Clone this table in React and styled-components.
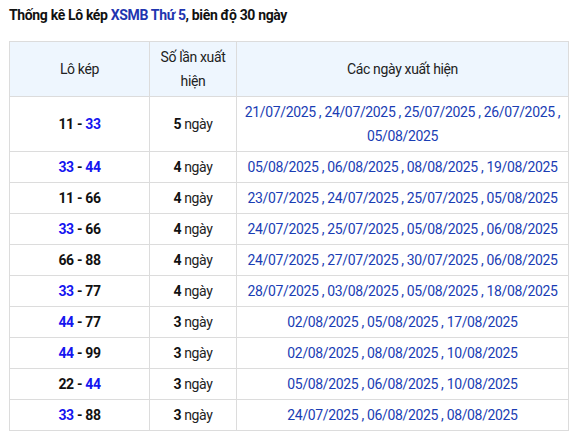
import React from 'react';
import styled, { createGlobalStyle } from 'styled-components';

const GlobalStyle = createGlobalStyle`
  body {
    margin: 0;
    background: #fff;
    font-family: Roboto, "Noto Sans", Arial, sans-serif;
    letter-spacing: -0.35px;
  }
`;

const rows = [
  { a: '11', aBlue: false, b: '33', bBlue: true, n: 5, dates: ['21/07/2025', '24/07/2025', '25/07/2025', '26/07/2025', '05/08/2025'] },
  { a: '33', aBlue: true, b: '44', bBlue: true, n: 4, dates: ['05/08/2025', '06/08/2025', '08/08/2025', '19/08/2025'] },
  { a: '11', aBlue: false, b: '66', bBlue: false, n: 4, dates: ['23/07/2025', '24/07/2025', '25/07/2025', '05/08/2025'] },
  { a: '33', aBlue: true, b: '66', bBlue: false, n: 4, dates: ['24/07/2025', '25/07/2025', '05/08/2025', '06/08/2025'] },
  { a: '66', aBlue: false, b: '88', bBlue: false, n: 4, dates: ['24/07/2025', '27/07/2025', '30/07/2025', '06/08/2025'] },
  { a: '33', aBlue: true, b: '77', bBlue: false, n: 4, dates: ['28/07/2025', '03/08/2025', '05/08/2025', '18/08/2025'] },
  { a: '44', aBlue: true, b: '77', bBlue: false, n: 3, dates: ['02/08/2025', '05/08/2025', '17/08/2025'] },
  { a: '44', aBlue: true, b: '99', bBlue: false, n: 3, dates: ['02/08/2025', '08/08/2025', '10/08/2025'] },
  { a: '22', aBlue: false, b: '44', bBlue: true, n: 3, dates: ['05/08/2025', '06/08/2025', '10/08/2025'] },
  { a: '33', aBlue: true, b: '88', bBlue: false, n: 3, dates: ['24/07/2025', '06/08/2025', '08/08/2025'] },
];

function App() {
  return (
    <Page>
      <GlobalStyle />
      <Title>
        Thống kê Lô kép <TitleLink>XSMB Thứ 5</TitleLink>, biên độ 30 ngày
      </Title>
      <Table>
        <colgroup>
          <col style={{ width: 140 }} />
          <col style={{ width: 87 }} />
          <col />
        </colgroup>
        <thead>
          <tr>
            <HeadCell>Lô kép</HeadCell>
            <HeadCell>Số lần xuất hiện</HeadCell>
            <HeadCell>Các ngày xuất hiện</HeadCell>
          </tr>
        </thead>
        <tbody>
          {rows.map((r, i) => (
            <tr key={i}>
              <Cell>
                <Pair>
                  <Num $blue={r.aBlue}>{r.a}</Num> - <Num $blue={r.bBlue}>{r.b}</Num>
                </Pair>
              </Cell>
              <Cell>
                <Count>{r.n}</Count> ngày
              </Cell>
              <DateCell>{r.dates.join(' , ')}</DateCell>
            </tr>
          ))}
        </tbody>
      </Table>
    </Page>
  );
}

export default App;

const Page = styled.div`
  padding: 3px 2px 0 9px;
`

const Title = styled.h2`
  margin: 0 0 14px;
  font-size: 14px;
  line-height: 24px;
  font-weight: 700;
  color: #111;
`

const TitleLink = styled.span`
  color: #1f35b0;
`

const Table = styled.table`
  width: 560px;
  border-collapse: collapse;
  table-layout: fixed;
  font-size: 14px;
  line-height: 24px;
  color: #222;
`

const HeadCell = styled.th`
  background: #eef6fe;
  border: 1px solid #dcdcdc;
  font-weight: 400;
  padding: 3px 6px;
  text-align: center;
  color: #222;
`

const Cell = styled.td`
  border: 1px solid #dcdcdc;
  padding: 3px 6px;
  text-align: center;
`

const DateCell = styled(Cell)`
  color: #1a3db4;
  padding: 3px 6px;
`

const Pair = styled.span`
  font-weight: 700;
  color: #111;
`

const Num = styled.span`
  color: ${(p) => (p.$blue ? '#1515f0' : '#111')};
`

const Count = styled.b`
  color: #111;
`
